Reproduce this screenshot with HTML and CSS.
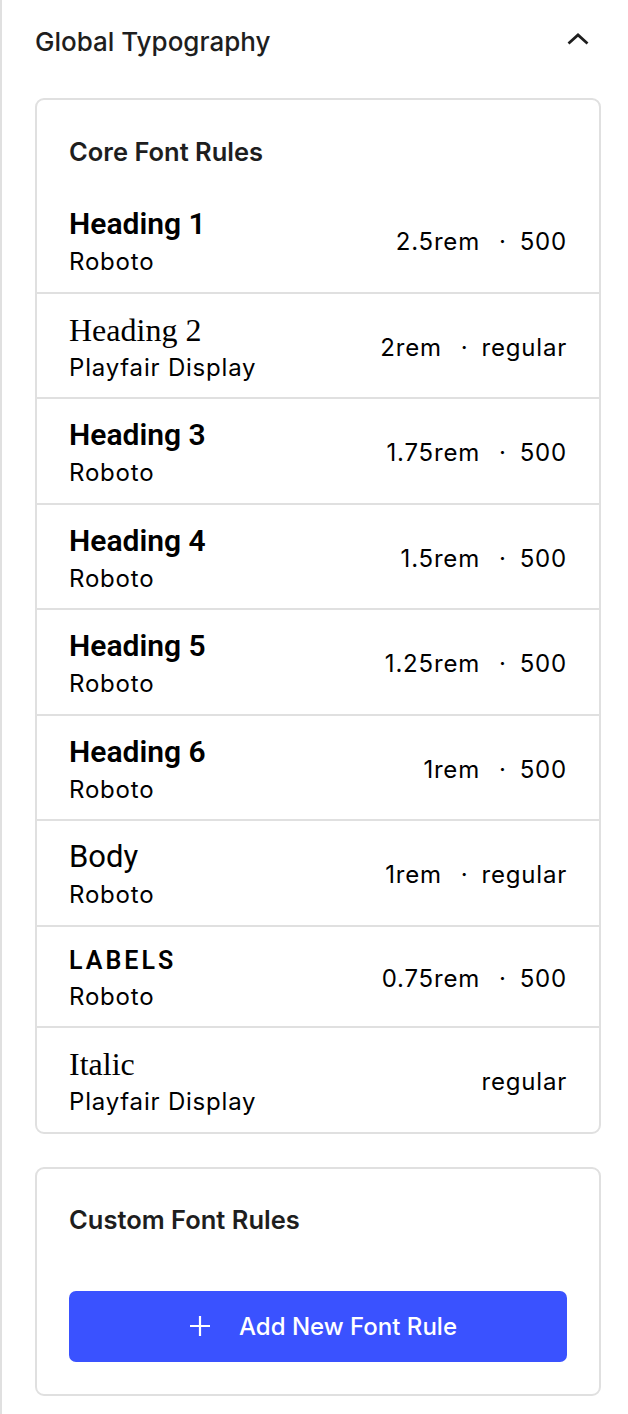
FILE: index.html
```html
<!DOCTYPE html>
<html lang="en">
<head>
<meta charset="utf-8">
<title>Global Typography</title>
<link rel="stylesheet" href="styles.css">
</head>
<body>
<div class="panel">
  <div class="panel-header">
    <h2 class="panel-title">Global Typography</h2>
    <svg class="chevron" width="24" height="14" viewBox="0 0 24 14" aria-hidden="true">
      <path d="M2.5 11.5 L12 3 L21.5 11.5" fill="none" stroke="#1e1e1e" stroke-width="2.8" stroke-linecap="butt" stroke-linejoin="miter"/>
    </svg>
  </div>

  <section class="card">
    <h3 class="card-title">Core Font Rules</h3>
    <ul class="rules">
      <li class="rule">
        <div class="rule-info">
          <div class="sample sample-heading">Heading 1</div>
          <div class="family">Roboto</div>
        </div>
        <div class="rule-meta"><span class="size">2.5rem</span><span class="dot">·</span><span class="weight">500</span></div>
      </li>
      <li class="rule">
        <div class="rule-info">
          <div class="sample sample-serif">Heading 2</div>
          <div class="family">Playfair Display</div>
        </div>
        <div class="rule-meta"><span class="size">2rem</span><span class="dot">·</span><span class="weight">regular</span></div>
      </li>
      <li class="rule">
        <div class="rule-info">
          <div class="sample sample-heading">Heading 3</div>
          <div class="family">Roboto</div>
        </div>
        <div class="rule-meta"><span class="size">1.75rem</span><span class="dot">·</span><span class="weight">500</span></div>
      </li>
      <li class="rule">
        <div class="rule-info">
          <div class="sample sample-heading">Heading 4</div>
          <div class="family">Roboto</div>
        </div>
        <div class="rule-meta"><span class="size">1.5rem</span><span class="dot">·</span><span class="weight">500</span></div>
      </li>
      <li class="rule">
        <div class="rule-info">
          <div class="sample sample-heading">Heading 5</div>
          <div class="family">Roboto</div>
        </div>
        <div class="rule-meta"><span class="size">1.25rem</span><span class="dot">·</span><span class="weight">500</span></div>
      </li>
      <li class="rule">
        <div class="rule-info">
          <div class="sample sample-heading">Heading 6</div>
          <div class="family">Roboto</div>
        </div>
        <div class="rule-meta"><span class="size">1rem</span><span class="dot">·</span><span class="weight">500</span></div>
      </li>
      <li class="rule">
        <div class="rule-info">
          <div class="sample sample-body">Body</div>
          <div class="family">Roboto</div>
        </div>
        <div class="rule-meta"><span class="size">1rem</span><span class="dot">·</span><span class="weight">regular</span></div>
      </li>
      <li class="rule rule-label">
        <div class="rule-info">
          <div class="sample sample-label">Labels</div>
          <div class="family">Roboto</div>
        </div>
        <div class="rule-meta"><span class="size">0.75rem</span><span class="dot">·</span><span class="weight">500</span></div>
      </li>
      <li class="rule">
        <div class="rule-info">
          <div class="sample sample-serif">Italic</div>
          <div class="family">Playfair Display</div>
        </div>
        <div class="rule-meta"><span class="weight">regular</span></div>
      </li>
    </ul>
  </section>

  <section class="card card-custom">
    <h3 class="card-title">Custom Font Rules</h3>
    <button class="add-btn" type="button">
      <svg class="plus" width="22" height="22" viewBox="0 0 22 22" aria-hidden="true">
        <path d="M11 1 V21 M1 11 H21" fill="none" stroke="#ffffff" stroke-width="2.2"/>
      </svg>
      <span>Add New Font Rule</span>
    </button>
  </section>
</div>
</body>
</html>
```

FILE: styles.css
```css
* {
  box-sizing: border-box;
}

html, body {
  margin: 0;
  padding: 0;
  background: #ffffff;
}

body {
  font-family: Inter, "Noto Sans", "Liberation Sans", sans-serif;
  color: #1e1e1e;
}

.panel {
  min-height: 1414px;
  border-left: 2px solid #e0e0e0;
  padding: 24px 27px 20px 33px;
}

.panel-header {
  display: flex;
  justify-content: space-between;
  align-items: flex-start;
}

.panel-title {
  margin: 0;
  font-size: 26px;
  line-height: 36px;
  font-weight: 500;
  color: #1e1e1e;
}

.chevron {
  margin-top: 8px;
  margin-right: 11px;
}

.card {
  border: 2px solid #e0e0e0;
  border-radius: 9px;
  margin-top: 38px;
}

.card-title {
  margin: 0;
  padding: 34px 32px 0;
  font-size: 25.5px;
  line-height: 36px;
  font-weight: 600;
  color: #1e1e1e;
}

.rules {
  list-style: none;
  margin: 18px 0 0;
  padding: 0;
}

.rule {
  display: flex;
  justify-content: space-between;
  align-items: center;
  padding: 16px 32px 11.5px;
  border-top: 2px solid #e0e0e0;
}

.rule:first-child {
  border-top: none;
}

.sample {
  color: #000000;
}

.sample-heading {
  font-family: Roboto, "Liberation Sans", sans-serif;
  font-size: 30px;
  line-height: 40px;
  font-weight: 600;
}

.sample-body {
  font-family: Roboto, "Liberation Sans", sans-serif;
  font-size: 31px;
  line-height: 40px;
  font-weight: 400;
}

.sample-serif {
  font-family: "Liberation Serif", "DejaVu Serif", serif;
  font-size: 32px;
  line-height: 40px;
  font-weight: 400;
}

.sample-label {
  font-family: Roboto, "Liberation Sans", sans-serif;
  font-size: 25px;
  line-height: 36px;
  font-weight: 600;
  text-transform: uppercase;
  letter-spacing: 3px;
}

.family {
  font-size: 24px;
  line-height: 36px;
  letter-spacing: 0.8px;
  color: #000000;
}

.rule-meta {
  display: flex;
  align-items: baseline;
  font-size: 24px;
  line-height: 36px;
  letter-spacing: 0.8px;
  color: #000000;
}

.dot {
  margin: 0 13px 0 19px;
}

.card-custom {
  margin-top: 33px;
  padding-bottom: 32px;
}

.card-custom .card-title {
  padding-top: 33px;
}

.add-btn {
  display: flex;
  align-items: center;
  justify-content: center;
  gap: 28px;
  width: calc(100% - 64px);
  height: 71px;
  margin: 53px 32px 0;
  padding: 0 0 0 10px;
  border: none;
  border-radius: 7px;
  background: #3a52ff;
  color: #ffffff;
  font-family: Inter, "Noto Sans", sans-serif;
  font-size: 24px;
  font-weight: 500;
  cursor: pointer;
}

.plus {
  display: block;
}
```
